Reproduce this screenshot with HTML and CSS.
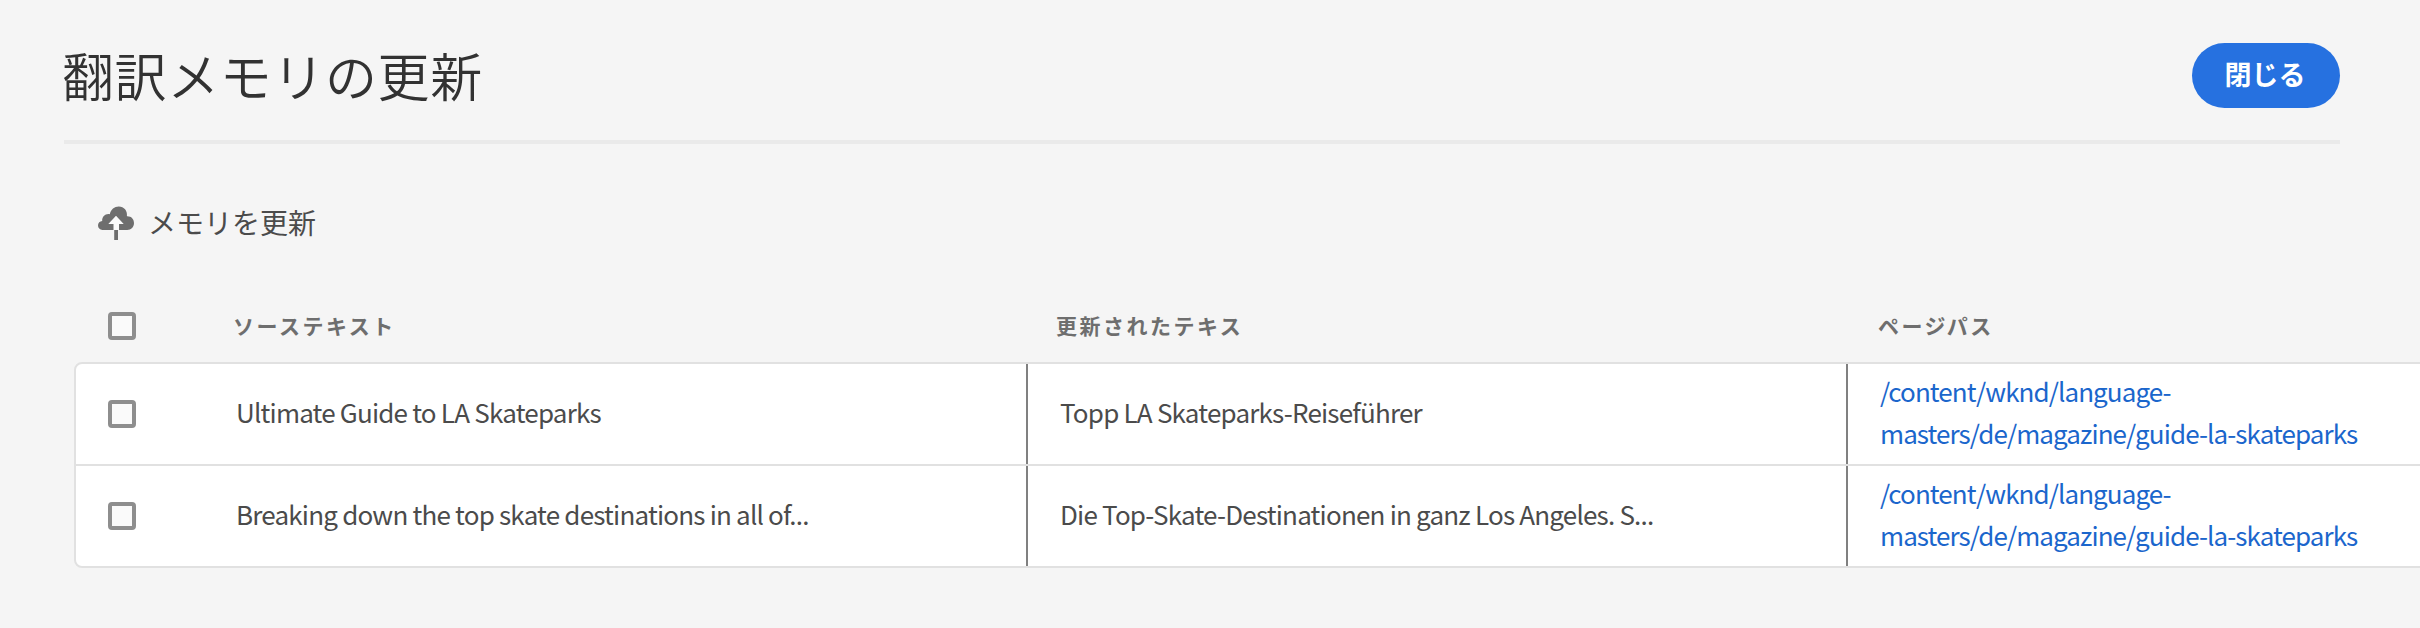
FILE: index.html
```
<!DOCTYPE html>
<html lang="ja">
<head>
<meta charset="utf-8">
<title>翻訳メモリの更新</title>
<link rel="stylesheet" href="styles.css">
</head>
<body>
<header class="header">
  <h1 class="title">翻訳メモリの更新</h1>
  <button class="close">閉じる</button>
</header>
<div class="toolbar">
  <svg class="cloud" viewBox="0 0 36 34" width="36" height="34">
    <path fill="#6e6e6e" d="M16 24H4.500C1.800 24 0 22 0 19.300C0 16.900 1.800 15 4.200 14.900C3.900 10.500 7.500 7.300 11.800 8.200C12.800 3.600 16.400 0.500 20.800 0.500C26 0.500 29.700 4.800 28.900 10.200C33 9.900 36 12.800 36 17C36 21 33.200 24 29.200 24H21V18H25.500L18 10L10.500 18H16Z"/>
    <path fill="#fafafa" d="M18 10L25.500 18H21V24H15.500V18H10.500Z"/>
    <path fill="#6e6e6e" d="M16.200 24H20V34H16.200Z"/>
  </svg>
  <span class="action">メモリを更新</span>
</div>
<main class="table">
  <div class="row head">
    <div class="check"><span class="box"></span></div>
    <div class="cell">ソーステキスト</div>
    <div class="cell">更新されたテキス</div>
    <div class="cell">ページパス</div>
  </div>
  <div class="rows">
    <div class="row item">
      <div class="check"><span class="box"></span></div>
      <div class="cell">Ultimate Guide to LA Skateparks</div>
      <div class="cell">Topp LA Skateparks-Reiseführer</div>
      <div class="cell"><a class="path">/content/wknd/language-<br>masters/de/magazine/guide-la-skateparks</a></div>
    </div>
    <div class="row item">
      <div class="check"><span class="box"></span></div>
      <div class="cell">Breaking down the top skate destinations in all of...</div>
      <div class="cell">Die Top-Skate-Destinationen in ganz Los Angeles. S...</div>
      <div class="cell"><a class="path">/content/wknd/language-<br>masters/de/magazine/guide-la-skateparks</a></div>
    </div>
  </div>
</main>
</body>
</html>
```
FILE: styles.css
```
* { box-sizing: border-box; }
body {
  margin: 0;
  height: 628px;
  overflow: hidden;
  background: #f5f5f5;
  color: #4b4b4b;
  font-family: "Noto Sans CJK JP", sans-serif;
}
.header {
  display: flex;
  justify-content: space-between;
  align-items: flex-start;
  height: 144px;
  margin: 0 80px 0 64px;
  padding-top: 43px;
  border-bottom: 4px solid #eaeaea;
}
.title {
  margin: 0 0 0 -2px;
  font-size: 52px;
  line-height: 64px;
  letter-spacing: 0.6px;
  font-weight: 350;
  color: #323232;
}
.close {
  width: 148px;
  height: 65px;
  padding: 0 2px 4px 0;
  border: 0;
  border-radius: 33px;
  background: #2671e0;
  color: #fff;
  font: 700 27px "Noto Sans CJK JP", sans-serif;
}
.toolbar {
  display: flex;
  align-items: center;
  height: 72px;
  margin-top: 43px;
  padding-left: 98px;
}
.action { margin-left: 14px; padding-bottom: 2px; font-size: 28px; line-height: 40px; }
.table { padding: 33px 0 0 74px; width: 2500px; }
.row {
  display: grid;
  grid-template-columns: 128px 826px 820px 1fr;
}
.head { height: 70px; align-items: center; padding: 0 2px 2px; color: #6e6e6e; }
.head .cell { font-size: 21px; font-weight: 700; letter-spacing: 2.5px; padding: 0 0 3px 29px; }
.head .cell:nth-child(n+3) { padding-left: 26px; }
.head .cell:nth-child(4) { padding-left: 28px; }
.check { padding-left: 32px; }
.box {
  display: block;
  width: 28px;
  height: 28px;
  border: 4px solid #8e8e8e;
  border-radius: 4px;
  background: #fafafa;
}
.rows { border: 2px solid #e1e1e1; border-radius: 8px; background: #fff; }
.item { height: 100px; }
.item + .item { border-top: 2px solid #e1e1e1; height: 102px; }
.item .check, .item .cell { display: flex; align-items: center; }
.item .cell { padding: 0 0 4px 32px; font-size: 26px; line-height: 42px; letter-spacing: -0.8px; white-space: nowrap; }
.item .cell:nth-child(n+3) { margin-left: -4px; border-left: 2px solid #808080; }
.item .path { color: #1b66cc; letter-spacing: -0.92px; }
```
